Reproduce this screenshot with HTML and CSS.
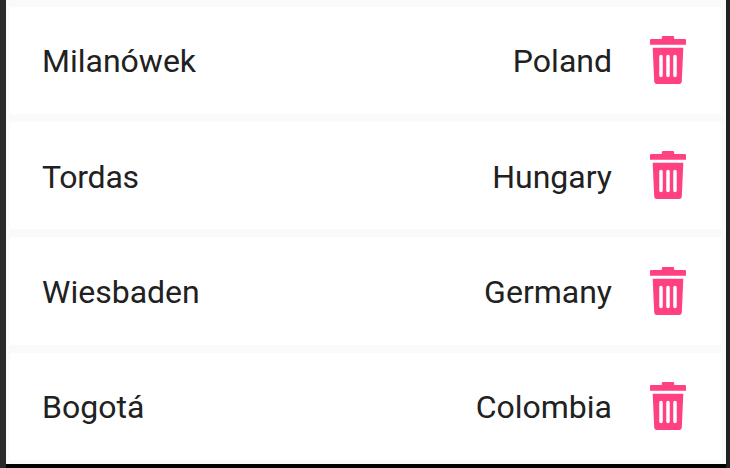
FILE: index.html
```html
<!DOCTYPE html>
<html lang="en">
<head>
<meta charset="utf-8">
<title>Cities</title>
<link rel="stylesheet" href="styles.css">
</head>
<body>
<svg class="sprite" aria-hidden="true"><symbol id="trash" viewBox="0 0 36 49"><path d="M0 4.300Q0 3 1.300 3H11.800V1.300Q11.800 0 13.300 0H22.700Q24.200 0 24.200 1.300V3H34.700Q36 3 36 4.300V8.700H0ZM2.700 11.700H33.300L31.800 45.500Q31.600 48 29 48H7Q4.400 48 4.200 45.500Z"/><path d="M11 20.600V39.400M18 20.600V39.400M25 20.600V39.400" stroke="#fff" stroke-width="3.500" stroke-linecap="round"/></symbol></svg>
<main class="list">
<div class="row"><span class="city">Milanówek</span><span class="country">Poland</span><svg class="trash"><use href="#trash"/></svg></div>
<div class="row"><span class="city tight">Tordas</span><span class="country">Hungary</span><svg class="trash"><use href="#trash"/></svg></div>
<div class="row"><span class="city">Wiesbaden</span><span class="country">Germany</span><svg class="trash"><use href="#trash"/></svg></div>
<div class="row"><span class="city">Bogotá</span><span class="country">Colombia</span><svg class="trash"><use href="#trash"/></svg></div>
</main>
</body>
</html>
```
FILE: styles.css
```css
* { box-sizing: border-box; }
body { margin: 0; height: 468px; overflow: hidden; background: linear-gradient(90deg, #292929 50%, #212121 50%); font-family: Roboto, sans-serif; }
.sprite { display: none; }
.list { margin: 0 4px 0 6px; height: 468px; padding: 6.500px 4px 0; background: #fafafa; border-bottom: 4px solid #000; display: flex; flex-direction: column; gap: 7.910px; }
.row { flex: 0 0 107.500px; display: flex; align-items: center; padding: 0 36px 0 32px; background: #fff; color: #212121; font-size: 32px; }
.city, .country { padding-top: 2px; }
.tight { letter-spacing: -.25px; }
.country { margin-left: auto; }
.trash { width: 36px; height: 49px; margin-left: 38px; fill: #ff4081; }
```
